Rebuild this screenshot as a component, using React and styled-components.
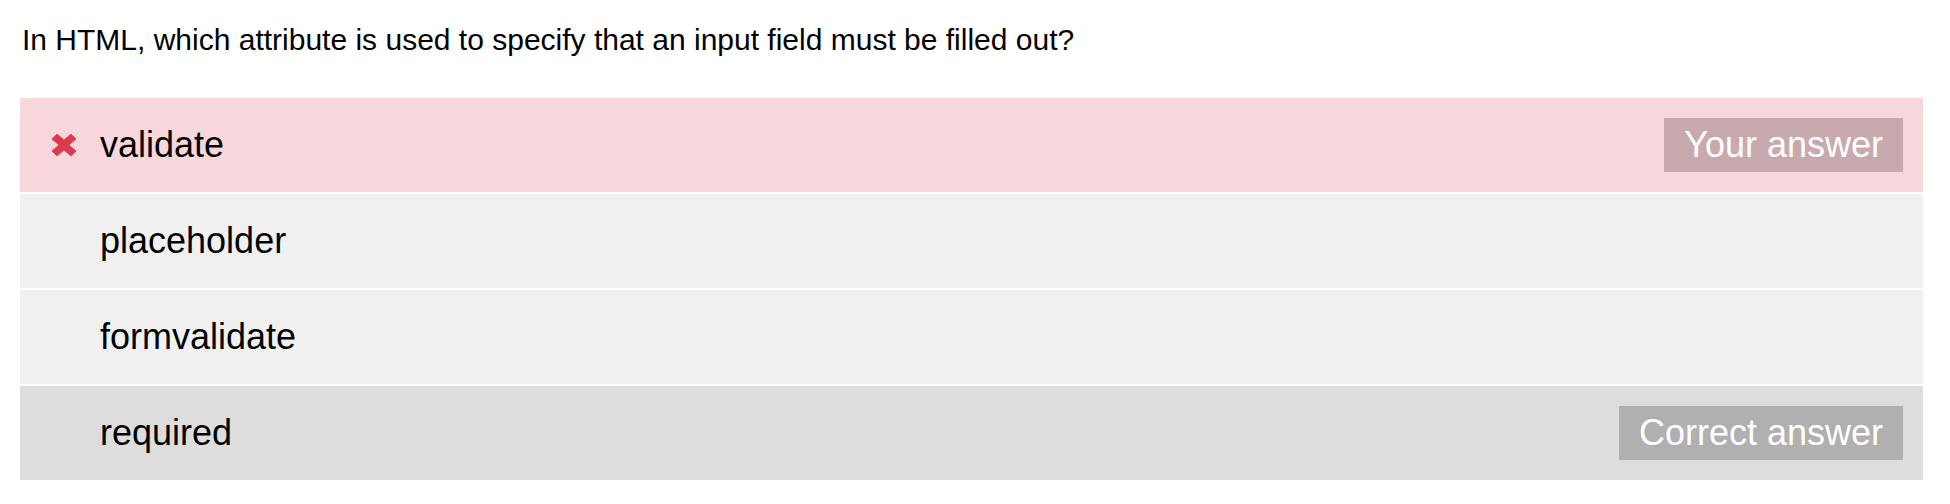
import React from "react"
import styled, { createGlobalStyle } from "styled-components"

const GlobalStyle = createGlobalStyle`
    body {
        margin: 0;
        background: #ffffff;
        font-family: "Liberation Sans", Arial, sans-serif;
        color: #000000;
    }
`

const Page = styled.div`
    padding: 23px 27px 0 20px;
`

const Question = styled.p`
    margin: 0 0 41px 2px;
    font-size: 30px;
    line-height: 34px;
`

const Options = styled.div`
    display: flex;
    flex-direction: column;
    gap: 2px;
`

const Row = styled.div`
    display: flex;
    align-items: center;
    height: 94px;
    padding: 0 20px 0 32px;
    background: ${(p) => p.$bg};
`

const IconCell = styled.div`
    display: flex;
    align-items: center;
    width: 48px;
    flex-shrink: 0;
`

const Label = styled.span`
    flex: 1;
    font-size: 36px;
    line-height: 36px;
`

const Badge = styled.span`
    height: 54px;
    padding: 0 20px;
    font-size: 36px;
    line-height: 54px;
    color: #ffffff;
    background: ${(p) => p.$bg};
`

function Cross() {
    return (
        <svg width="24" height="22" viewBox="0 0 24 22">
            <path
                d="M5 0 L12 6 L19 0 L24 5 L17 11 L24 17 L19 22 L12 16 L5 22 L0 17 L7 11 L0 5 Z"
                fill="#dc3a4d"
                stroke="#dc3a4d"
                strokeWidth="0.8"
                strokeLinejoin="round"
            />
        </svg>
    )
}

const options = [
    { text: "validate", bg: "#f7d6dc", wrong: true, badge: "Your answer", badgeBg: "#c8aaae" },
    { text: "placeholder", bg: "#f0f0f0" },
    { text: "formvalidate", bg: "#f0f0f0" },
    { text: "required", bg: "#dddddd", badge: "Correct answer", badgeBg: "#b0b0b0" },
]

export default function App() {
    return (
        <Page>
            <GlobalStyle />
            <Question>In HTML, which attribute is used to specify that an input field must be filled out?</Question>
            <Options>
                {options.map((o) => (
                    <Row key={o.text} $bg={o.bg}>
                        <IconCell>{o.wrong && <Cross />}</IconCell>
                        <Label>{o.text}</Label>
                        {o.badge && <Badge $bg={o.badgeBg}>{o.badge}</Badge>}
                    </Row>
                ))}
            </Options>
        </Page>
    )
}
